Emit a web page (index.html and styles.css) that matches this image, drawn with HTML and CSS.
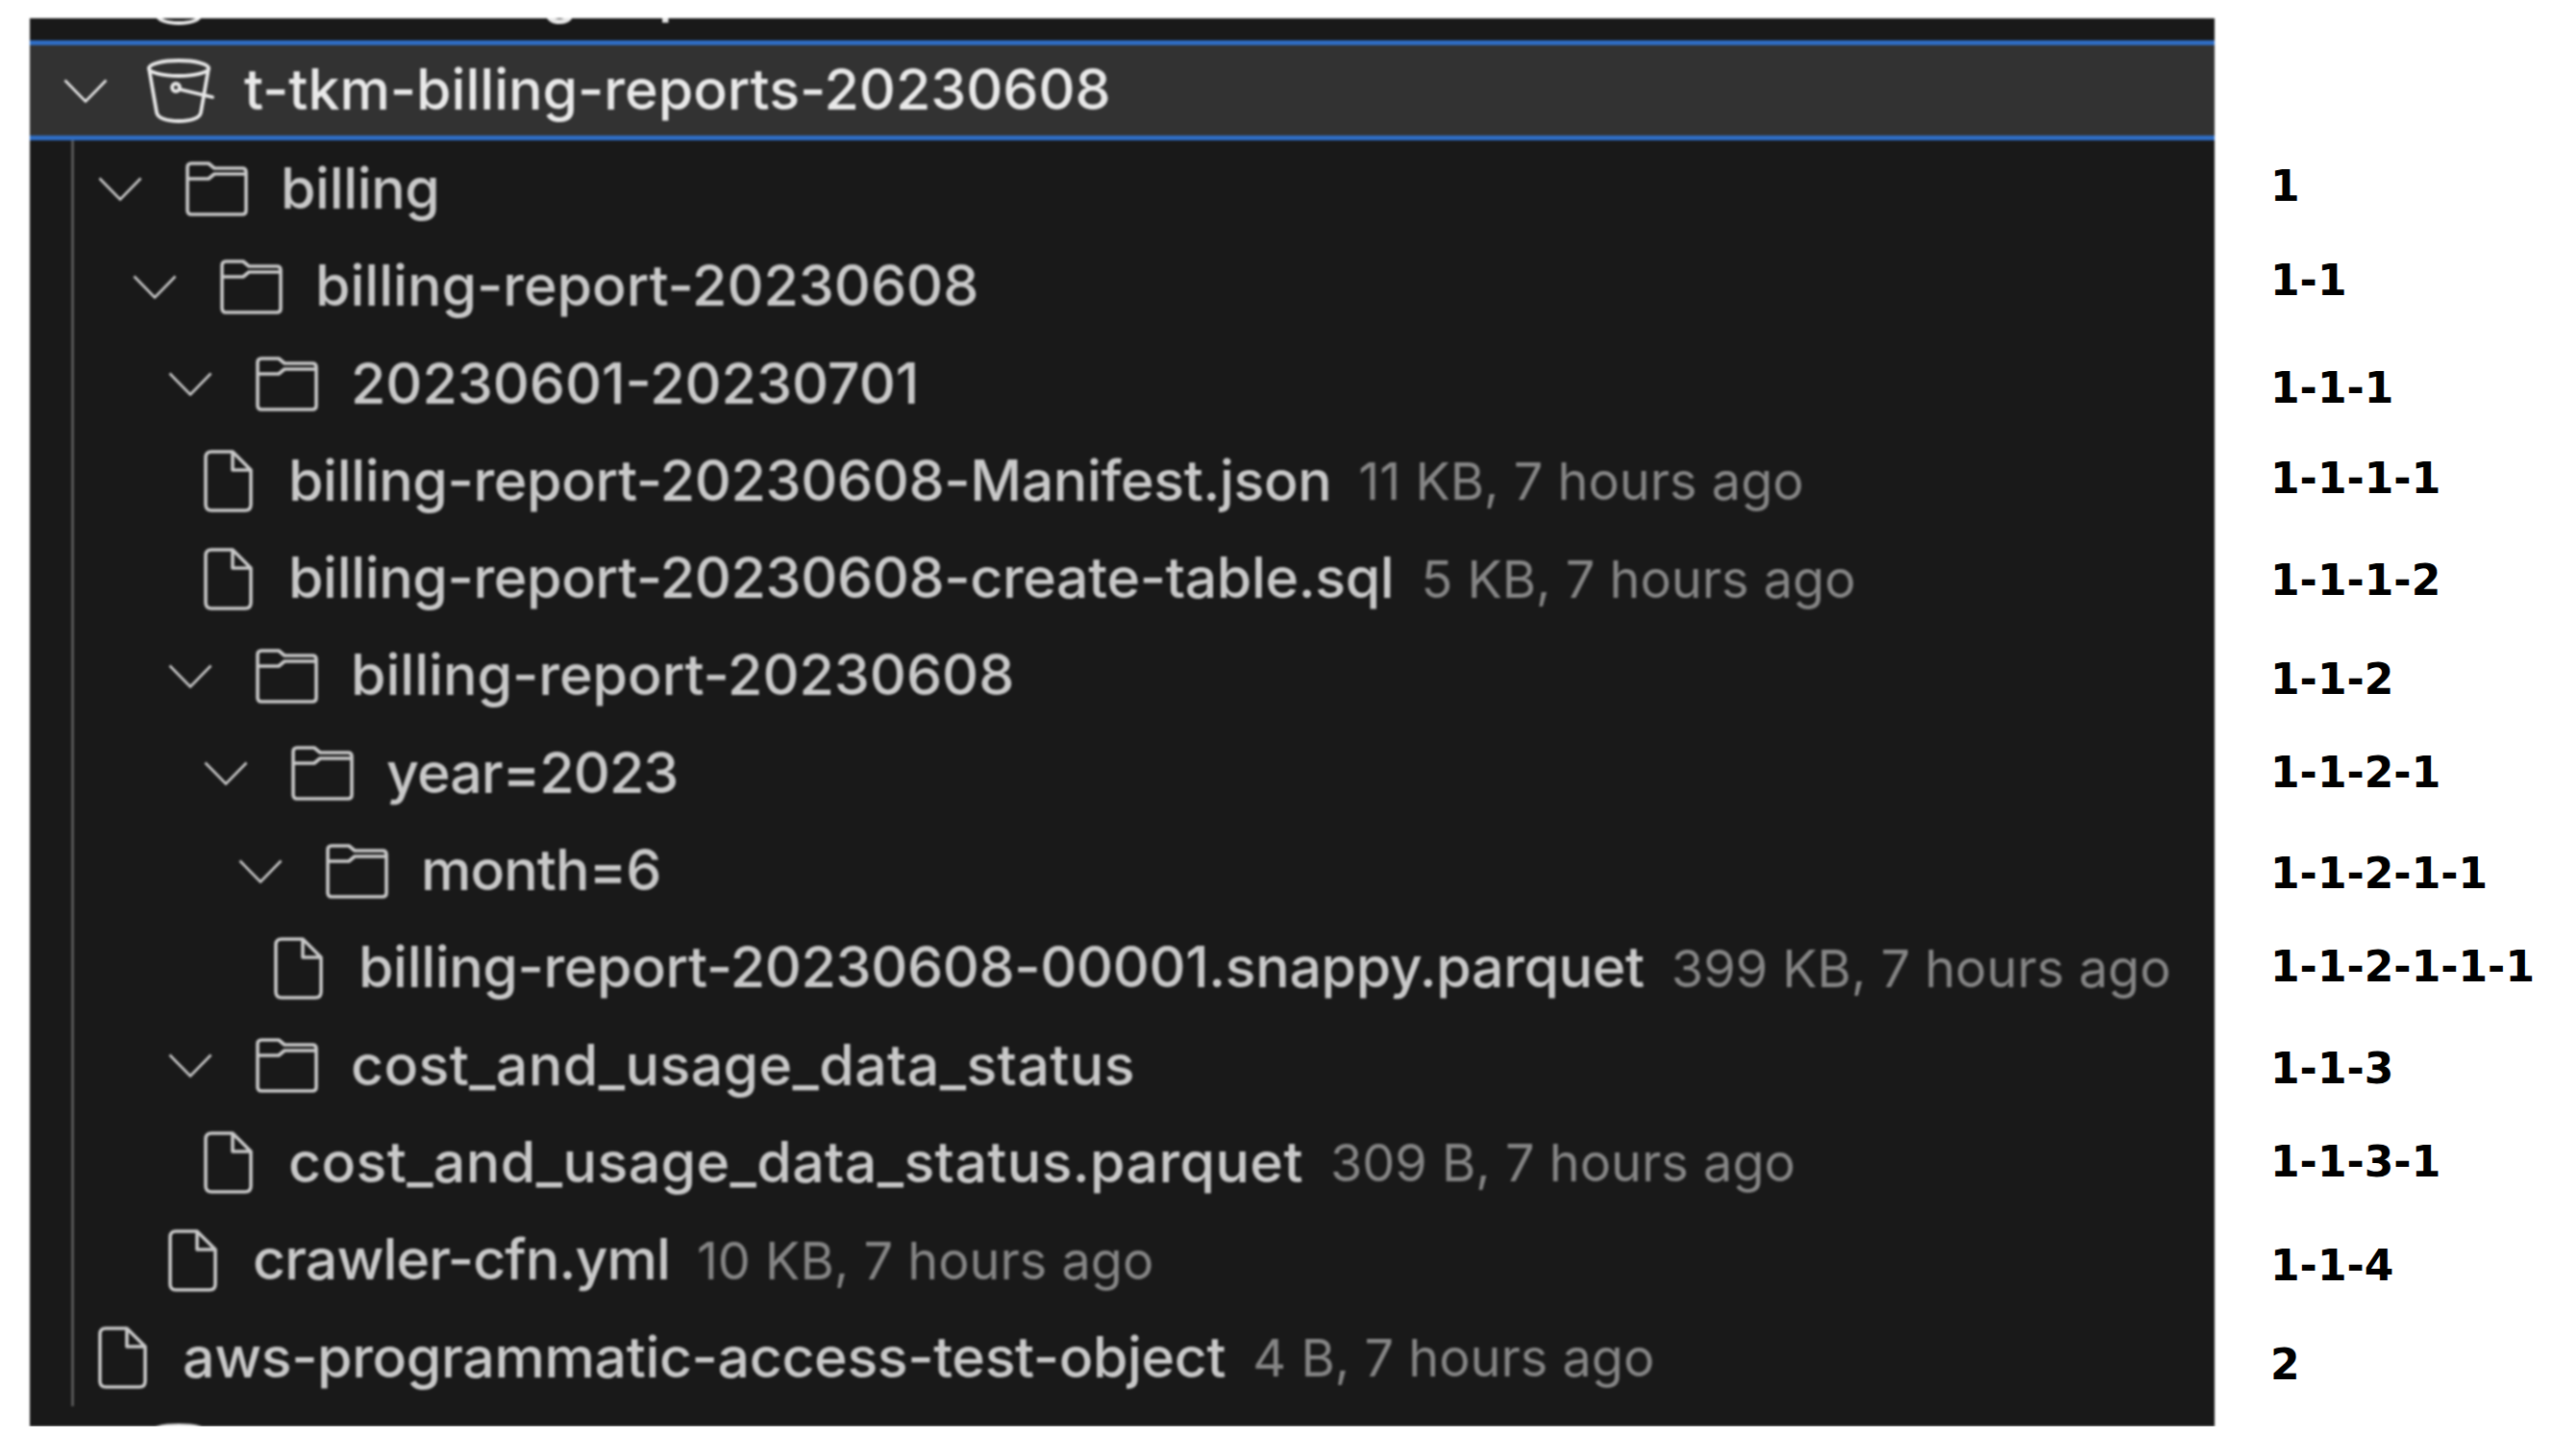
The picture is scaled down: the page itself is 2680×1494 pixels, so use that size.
FILE: index.html
```html
<!DOCTYPE html>
<html lang="en">
<head>
    <meta charset="UTF-8">
    <meta name="viewport" content="width=device-width, initial-scale=1.0">
    <title>Bucket tree</title>
    <link rel="stylesheet" href="styles.css">
</head>
<body>

    <svg class="defs" aria-hidden="true">
        <symbol id="chevron" viewBox="0 0 46 25">
            <path d="M1.5 1.5 23 23.5 44.5 1.5" fill="none" stroke="currentColor" stroke-width="2.6"/>
        </symbol>
        <symbol id="bucket" viewBox="0 0 72 68">
            <g fill="none" stroke="currentColor" stroke-width="3.8" stroke-linecap="round" stroke-linejoin="round">
                <ellipse cx="34" cy="11" rx="31" ry="8"/>
                <path d="M3 11 11 57C12 63 22 66 34 66S56 63 57 57L65 11"/>
                <circle cx="31" cy="31" r="4"/>
                <path d="M35 33 69 41"/>
            </g>
        </symbol>
        <symbol id="folder" viewBox="0 0 65 57">
            <g fill="none" stroke="currentColor" stroke-width="3.6" stroke-linejoin="round">
                <path d="M2 6Q2 2 6 2H24L30 7H59Q63 7 63 11V51Q63 55 59 55H6Q2 55 2 51Z"/>
                <path d="M2 18H24L30 13H63"/>
            </g>
        </symbol>
        <symbol id="file" viewBox="0 0 51 65">
            <g fill="none" stroke="currentColor" stroke-width="3.6" stroke-linejoin="round">
                <path d="M8 2H30L49 21V57Q49 63 43 63H8Q2 63 2 57V8Q2 2 8 2Z"/>
                <path d="M30 2V21H49"/>
            </g>
        </symbol>
    </svg>

    <div class="page">
        <div class="tree">
            <div class="row row-cut-top bucket-row">
                <svg class="chevron"><use href="#chevron"/></svg>
                <svg class="bucket"><use href="#bucket"/></svg>
                <span class="name">t-tkm-billing-reports-20230607</span>
            </div>

            <div class="row bucket-row selected">
                <svg class="chevron"><use href="#chevron"/></svg>
                <svg class="bucket"><use href="#bucket"/></svg>
                <span class="name">t-tkm-billing-reports-20230608</span>
            </div>

            <div class="children">
                <div class="row lvl-1">
                    <svg class="chevron"><use href="#chevron"/></svg>
                    <svg class="folder"><use href="#folder"/></svg>
                    <span class="name tight">billing</span>
                </div>
                <div class="row lvl-2">
                    <svg class="chevron"><use href="#chevron"/></svg>
                    <svg class="folder"><use href="#folder"/></svg>
                    <span class="name">billing-report-20230608</span>
                </div>
                <div class="row lvl-3">
                    <svg class="chevron"><use href="#chevron"/></svg>
                    <svg class="folder"><use href="#folder"/></svg>
                    <span class="name">20230601-20230701</span>
                </div>
                <div class="row lvl-4">
                    <svg class="file"><use href="#file"/></svg>
                    <span class="name tight">billing-report-20230608-Manifest.json</span>
                    <span class="info">11 KB, 7 hours ago</span>
                </div>
                <div class="row lvl-4">
                    <svg class="file"><use href="#file"/></svg>
                    <span class="name tight">billing-report-20230608-create-table.sql</span>
                    <span class="info">5 KB, 7 hours ago</span>
                </div>
                <div class="row lvl-3">
                    <svg class="chevron"><use href="#chevron"/></svg>
                    <svg class="folder"><use href="#folder"/></svg>
                    <span class="name">billing-report-20230608</span>
                </div>
                <div class="row lvl-4">
                    <svg class="chevron"><use href="#chevron"/></svg>
                    <svg class="folder"><use href="#folder"/></svg>
                    <span class="name tighter">year=2023</span>
                </div>
                <div class="row lvl-5">
                    <svg class="chevron"><use href="#chevron"/></svg>
                    <svg class="folder"><use href="#folder"/></svg>
                    <span class="name tighter">month=6</span>
                </div>
                <div class="row lvl-6">
                    <svg class="file"><use href="#file"/></svg>
                    <span class="name tight">billing-report-20230608-00001.snappy.parquet</span>
                    <span class="info">399 KB, 7 hours ago</span>
                </div>
                <div class="row lvl-3">
                    <svg class="chevron"><use href="#chevron"/></svg>
                    <svg class="folder"><use href="#folder"/></svg>
                    <span class="name snake">cost_and_usage_data_status</span>
                </div>
                <div class="row lvl-4">
                    <svg class="file"><use href="#file"/></svg>
                    <span class="name snake">cost_and_usage_data_status.parquet</span>
                    <span class="info">309 B, 7 hours ago</span>
                </div>
                <div class="row lvl-3">
                    <svg class="file"><use href="#file"/></svg>
                    <span class="name tighter">crawler-cfn.yml</span>
                    <span class="info">10 KB, 7 hours ago</span>
                </div>
                <div class="row lvl-1">
                    <svg class="file"><use href="#file"/></svg>
                    <span class="name tight">aws-programmatic-access-test-object</span>
                    <span class="info">4 B, 7 hours ago</span>
                </div>
            </div>

            <div class="row bucket-row">
                <svg class="chevron"><use href="#chevron"/></svg>
                <svg class="bucket"><use href="#bucket"/></svg>
                <span class="name">t-tkm-billing-reports-20230606</span>
            </div>
        </div>

        <div class="notes">
            <div class="note">1</div>
            <div class="note">1-1</div>
            <div class="note">1-1-1</div>
            <div class="note">1-1-1-1</div>
            <div class="note">1-1-1-2</div>
            <div class="note">1-1-2</div>
            <div class="note">1-1-2-1</div>
            <div class="note">1-1-2-1-1</div>
            <div class="note">1-1-2-1-1-1</div>
            <div class="note">1-1-3</div>
            <div class="note">1-1-3-1</div>
            <div class="note">1-1-4</div>
            <div class="note">2</div>
        </div>
    </div>

</body>
</html>
```

FILE: styles.css
```css
body {
    margin: 0;
    background-color: #fff;
    font-family: Inter, "Liberation Sans", sans-serif;
    overflow: hidden;
}

.defs {
    display: none;
}

.page {
    display: flex;
    padding: 19px 0 0 31px;
}

.tree {
    width: 2273px;
    height: 1465px;
    background-color: #191919;
    overflow: hidden;
    color: #c8c8c8;
    font-size: 59px;
    font-weight: 500;
    filter: blur(0.8px);
}

.row {
    display: flex;
    align-items: center;
    height: 101.3px;
    white-space: nowrap;
}

.row-cut-top {
    margin-top: -78px;
}

.bucket-row {
    padding-left: 35px;
    color: #e8e8e8;
}

.selected {
    box-sizing: border-box;
    height: 104px;
    background-color: #323232;
    border-top: 5px solid #2f6dc4;
    border-bottom: 5px solid #2f6dc4;
}

.children {
    margin-left: 43px;
    border-left: 3px solid #555;
}

.lvl-1 { padding-left: 25px; }
.lvl-2 { padding-left: 61px; }
.lvl-3 { padding-left: 98px; }
.lvl-4 { padding-left: 135px; }
.lvl-5 { padding-left: 171px; }
.lvl-6 { padding-left: 208px; }

.name {
    margin-bottom: 3px;
}

/* Inter runs a bit wider or narrower than the original font on some names */
.tight {
    letter-spacing: -0.35px;
}

.tighter {
    letter-spacing: -0.9px;
}

.snake {
    letter-spacing: 0.4px;
}

.chevron {
    width: 46px;
    height: 25px;
    flex: none;
    margin-right: 45px;
}

.bucket {
    width: 72px;
    height: 68px;
    flex: none;
    margin-right: 30px;
    margin-left: -5px;
}

.folder {
    width: 65px;
    height: 57px;
    flex: none;
    margin-right: 34px;
}

.file {
    width: 51px;
    height: 65px;
    flex: none;
    margin-right: 37px;
}

.info {
    margin-left: 28px;
    color: #858585;
    font-size: 54px;
    font-weight: 400;
}

.notes {
    margin-left: 58px;
    padding-top: 150px;
    font-family: "DejaVu Sans", sans-serif;
    font-weight: bold;
    font-size: 44px;
    color: #000;
}

.note {
    height: 50px;
    line-height: 50px;
    white-space: nowrap;
}

.note:nth-child(2) { margin-top: 48px; }
.note:nth-child(3) { margin-top: 62px; }
.note:nth-child(4) { margin-top: 44px; }
.note:nth-child(5) { margin-top: 56px; }
.note:nth-child(6) { margin-top: 53px; }
.note:nth-child(7) { margin-top: 47px; }
.note:nth-child(8) { margin-top: 55px; }
.note:nth-child(9) { margin-top: 47px; }
.note:nth-child(10) { margin-top: 56px; }
.note:nth-child(11) { margin-top: 47px; }
.note:nth-child(12) { margin-top: 58px; }
.note:nth-child(13) { margin-top: 53px; }
```
